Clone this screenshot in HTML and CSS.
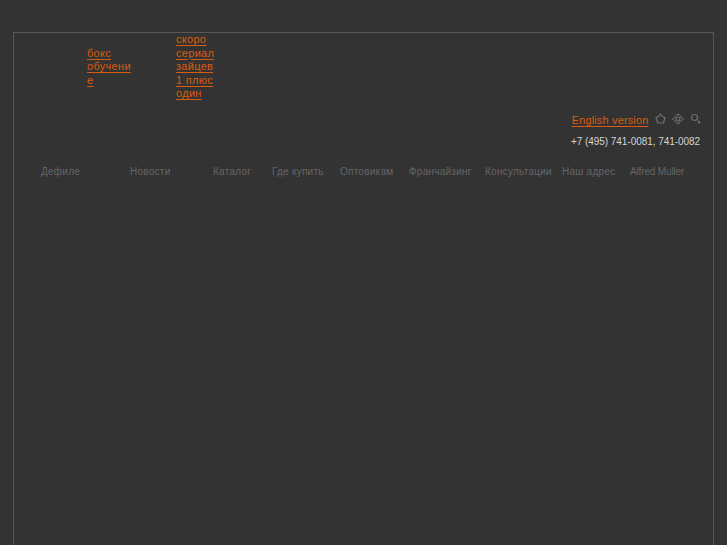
FILE: index.html
```html
<!DOCTYPE html>
<html lang="ru">
<head>
<meta charset="utf-8">
<title>Alfred Muller</title>
<link rel="stylesheet" href="styles.css">
</head>
<body>
<div class="frame">
  <div class="promos">
    <a class="promo promo-a" href="#">бокс обучение</a>
    <a class="promo promo-b" href="#">скоро сериал зайцев 1 плюс один</a>
  </div>
  <div class="utility">
    <a class="lang" href="#">English version</a>
    <svg class="icon" width="11" height="11" viewBox="0 0 11 11"><path d="M5.500 1 L7.500 3.500 L10 4.500 L9 8 L8.500 10 L2.500 10 L2 8 L1 4.500 L3.500 3.500 Z"/></svg>
    <svg class="icon" width="12" height="12" viewBox="0 0 12 12"><path d="M6 .8 L11.200 6 L6 11.200 L.8 6 Z" stroke-dasharray="2 1"/><circle cx="6" cy="6" r="2"/></svg>
    <svg class="icon" width="11" height="11" viewBox="0 0 11 11"><circle cx="4.500" cy="4.500" r="3"/><path d="M8 8 L10 10" stroke-width="2"/></svg>
  </div>
  <div class="phone">+7 (495) 741-0081, 741-0082</div>
  <nav class="menu">
    <a href="#">Дефиле</a>
    <a href="#">Новости</a>
    <a href="#">Каталог</a>
    <a href="#">Где купить</a>
    <a href="#">Оптовикам</a>
    <a href="#">Франчайзинг</a>
    <a href="#">Консультации</a>
    <a href="#">Наш адрес</a>
    <a class="latin" href="#">Alfred Muller</a>
  </nav>
</div>
</body>
</html>
```
FILE: styles.css
```css
html, body {
  margin: 0;
  height: 100%;
  overflow: hidden;
}
body {
  background: #333;
  font-family: "Liberation Sans", Arial, sans-serif;
  font-size: 11px;
}
.frame {
  box-sizing: border-box;
  height: 513px;
  margin: 32px 13px 0;
  border: 1px solid #585858;
  border-bottom: 0;
}
.promos {
  display: grid;
  grid-template-columns: 89px 44px;
  align-items: center;
  padding-left: 73px;
  line-height: 13.6px;
  letter-spacing: .3px;
}
.promo {
  display: block;
  color: #d95c10;
  text-underline-offset: 2px;
}
.promo-a { width: 44px; overflow-wrap: anywhere; }
.promo-b { width: 40px; }
.utility {
  display: flex;
  justify-content: flex-end;
  align-items: center;
  gap: 6px;
  padding: 12px 12.500px 0 0;
}
.lang {
  color: #d95c10;
  letter-spacing: .15px;
  text-underline-offset: 2px;
}
.icon {
  margin-bottom: 2px;
  fill: none;
  stroke: #707070;
  stroke-width: 1.2;
}
.phone {
  margin-top: 8px;
  padding-right: 13px;
  text-align: right;
  color: #d4d4d4;
  font-size: 10px;
  line-height: 13px;
  letter-spacing: -.05px;
}
.menu {
  display: grid;
  grid-template-columns: 89px 83px 59px 68px 69px 76px 77px 68px auto;
  padding: 17px 0 0 27px;
  font-size: 10px;
  letter-spacing: .25px;
  line-height: 13px;
}
.menu a {
  color: #666;
  text-decoration: none;
  white-space: nowrap;
}
.menu .latin { letter-spacing: -.15px; }
```
